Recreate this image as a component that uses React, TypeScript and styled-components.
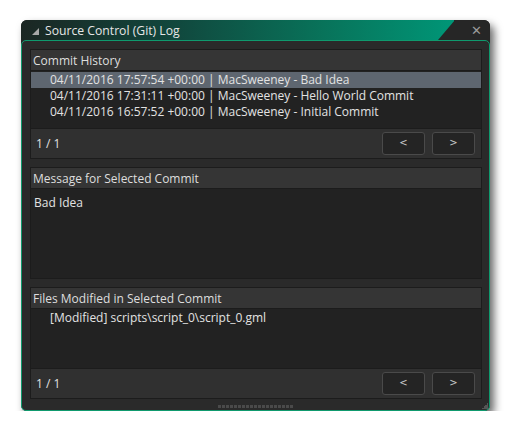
import React from 'react'
import styled, { createGlobalStyle } from 'styled-components'

const GlobalStyle = createGlobalStyle`
  html, body {
    margin: 0;
    padding: 0;
    background: #ffffff;
  }
  body {
    font-family: 'Open Sans', 'Noto Sans', 'Liberation Sans', sans-serif;
    font-size: 12px;
    color: #dcdcdc;
  }
`

/* 窗口外框 */
const Window = styled.div`
  width: 469px;
  margin: 20px 0 0 21px;
  display: flex;
  flex-direction: column;
  background: #262626;
  border-radius: 6px;
  box-shadow: 4px 5px 8px rgba(0, 0, 0, 0.6);
`

/* 标题栏 */
const TitleBar = styled.div`
  height: 20px;
  display: flex;
  align-items: stretch;
  border-radius: 6px 6px 0 0;
  overflow: hidden;
`

const TitleMain = styled.div`
  flex: 1;
  display: flex;
  align-items: center;
  gap: 6px;
  padding-left: 11px;
  background: linear-gradient(90deg, #1b2623 0%, #11473d 35%, #08735a 70%, #009677 100%);
  font-size: 12.2px;
  color: #e6e6e6;
`

const Arrow = styled.span`
  width: 0;
  height: 0;
  margin-top: 2px;
  border-left: 7px solid transparent;
  border-bottom: 7px solid #a8a8a8;
`

const CloseTab = styled.div`
  width: 52px;
  margin-left: -16px;
  display: flex;
  align-items: center;
  justify-content: flex-end;
  padding-right: 8px;
  box-sizing: border-box;
  background: #262626;
  clip-path: polygon(17px 0, 100% 0, 100% 100%, 0 100%);
  color: #9a9a9a;
  font-size: 13px;
  font-family: 'DejaVu Sans', sans-serif;
`

/* 主体 */
const Body = styled.div`
  position: relative;
  display: flex;
  flex-direction: column;
  gap: 8px;
  padding: 8px 7px 0 8px;
  background: #2a2a2a;
  border: 1px solid #0f9a6e;
  border-radius: 5px;
`

const Section = styled.section`
  display: flex;
  flex-direction: column;
`

const Header = styled.div`
  height: 20px;
  display: flex;
  align-items: center;
  padding-left: 2px;
  background: #353535;
  border: 1px solid #1c1c1c;
  color: #dedede;
`

const Content = styled.div<{ $h: number; $closed?: boolean }>`
  height: ${p => p.$h}px;
  background: #222222;
  border-left: 1px solid #1c1c1c;
  border-right: 1px solid #1c1c1c;
  border-bottom: ${p => (p.$closed ? '1px solid #1c1c1c' : 'none')};
  padding-top: 1px;
  box-sizing: border-box;
`

const Row = styled.div<{ $selected?: boolean }>`
  height: 16px;
  line-height: 16px;
  padding-left: 19px;
  white-space: nowrap;
  background: ${p => (p.$selected ? '#5e6670' : 'transparent')};
  color: #e2e2e2;
`

const MessageText = styled.div`
  padding: 4px 0 0 3px;
  color: #e2e2e2;
`

const Footer = styled.div`
  height: 29px;
  display: flex;
  align-items: center;
  justify-content: space-between;
  padding: 0 6px 0 5px;
  background: #303030;
  border: 1px solid #1c1c1c;
`

const PageText = styled.span`
  color: #e2e2e2;
`

const Buttons = styled.div`
  display: flex;
  gap: 7px;
`

const NavButton = styled.button`
  width: 43px;
  height: 23px;
  display: flex;
  align-items: center;
  justify-content: center;
  padding: 0 0 2px;
  background: #242424;
  border: 1px solid #4a4a4a;
  border-radius: 3px;
  color: #c8c8c8;
  font-family: 'DejaVu Sans', sans-serif;
  font-size: 10px;
`

/* 底部拖动条 */
const Grip = styled.div`
  align-self: center;
  width: 76px;
  height: 3px;
  margin: -2px 0 2px;
  background: repeating-linear-gradient(90deg, #4a4a4a 0 3px, transparent 3px 4px);
`

const CornerGrip = styled.div`
  position: absolute;
  right: 1px;
  bottom: 1px;
  width: 6px;
  height: 6px;
  background: linear-gradient(135deg, transparent 50%, #555 50%);
`

const commits = [
  '04/11/2016 17:57:54 +00:00 | MacSweeney - Bad Idea',
  '04/11/2016 17:31:11 +00:00 | MacSweeney - Hello World Commit',
  '04/11/2016 16:57:52 +00:00 | MacSweeney - Initial Commit',
]

const Pager: React.FC = () => (
  <Footer>
    <PageText>1 / 1</PageText>
    <Buttons>
      <NavButton>&lt;</NavButton>
      <NavButton>&gt;</NavButton>
    </Buttons>
  </Footer>
)

const App: React.FC = () => (
  <>
    <GlobalStyle />
    <Window>
      <TitleBar>
        <TitleMain>
          <Arrow />
          Source Control (Git) Log
        </TitleMain>
        <CloseTab>✕</CloseTab>
      </TitleBar>
      <Body>
        {/* 提交历史 */}
        <Section>
          <Header>Commit History</Header>
          <Content $h={57}>
            {commits.map((c, i) => (
              <Row key={c} $selected={i === 0}>
                {c}
              </Row>
            ))}
          </Content>
          <Pager />
        </Section>

        {/* 提交信息 */}
        <Section>
          <Header>Message for Selected Commit</Header>
          <Content $h={90} $closed>
            <MessageText>Bad Idea</MessageText>
          </Content>
        </Section>

        {/* 修改的文件 */}
        <Section>
          <Header>Files Modified in Selected Commit</Header>
          <Content $h={59}>
            <Row>[Modified] scripts\script_0\script_0.gml</Row>
          </Content>
          <Pager />
        </Section>

        <Grip />
        <CornerGrip />
      </Body>
    </Window>
  </>
)

export default App
